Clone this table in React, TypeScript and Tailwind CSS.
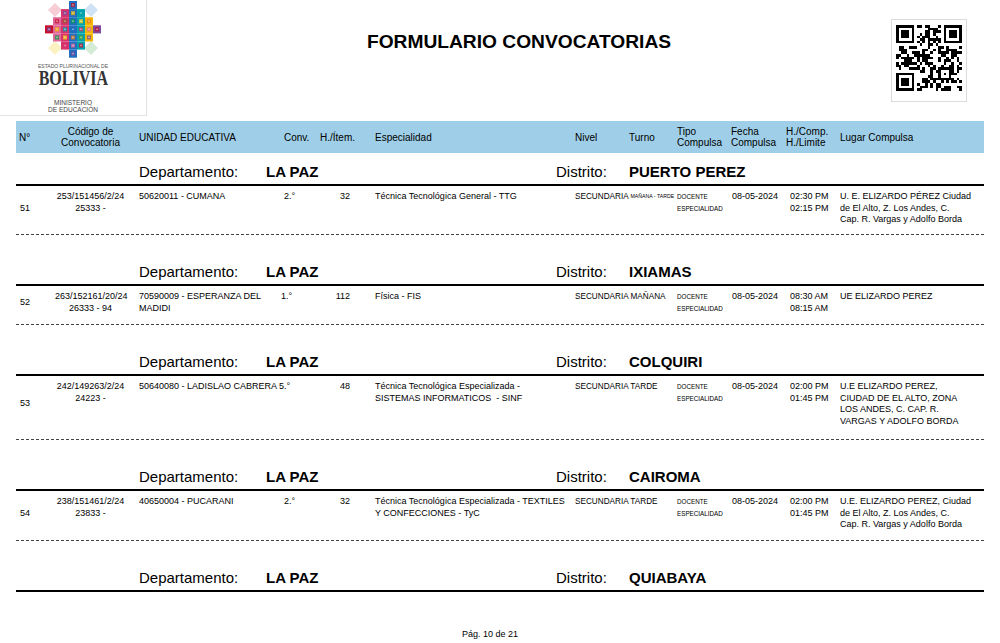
import React from "react";

const TILE_COLORS = [
  "#c8102e", "#f2b705", "#0a9a48", "#1f6fc0", "#e87722", "#e0679a",
  "#7a4b9c", "#8b5a2b", "#00a3ad", "#f5d31a", "#d6336c", "#5aa02c",
];

function Chakana() {
  const tiles: React.ReactNode[] = [];
  const tw = 8;
  const th = 8.1;
  for (let r = 0; r < 7; r++) {
    for (let c = 0; c < 7; c++) {
      if (Math.abs(r - 3) + Math.abs(c - 3) <= 3) {
        const i = r * 7 + c;
        const a = TILE_COLORS[(i * 5 + r) % TILE_COLORS.length];
        const b = TILE_COLORS[(i * 7 + 3) % TILE_COLORS.length];
        tiles.push(
          <g key={i}>
            <rect x={c * tw} y={r * th} width={tw} height={th} fill={a} />
            <rect x={c * tw + 2} y={r * th + 2} width={tw - 4} height={th - 4} fill={b} opacity={0.75} />
            <rect x={c * tw + 3.3} y={r * th + 3.3} width={1.4} height={1.4} fill="#fff" opacity={0.6} />
          </g>
        );
      }
    }
  }
  return (
    <svg width={56} height={57} viewBox="0 0 56 57">
      <polygon points="10,2 17,9 10,16 3,9" fill="#f7cdd6" />
      <polygon points="46,2 53,9 46,16 39,9" fill="#cfe3f4" />
      <polygon points="10,40 17,47 10,54 3,47" fill="#fbf1c2" />
      <polygon points="46,40 53,47 46,54 39,47" fill="#d4ecd6" />
      {tiles}
    </svg>
  );
}

function QR() {
  const N = 25;
  let s = 987654321;
  const rnd = () => {
    s = (Math.imul(s, 1664525) + 1013904223) >>> 0;
    return s / 4294967296;
  };
  const m: boolean[][] = [];
  for (let r = 0; r < N; r++) {
    const row: boolean[] = [];
    for (let c = 0; c < N; c++) row.push(rnd() < 0.5);
    m.push(row);
  }
  const finder = (r0: number, c0: number) => {
    for (let i = -1; i <= 7; i++) {
      for (let j = -1; j <= 7; j++) {
        const r = r0 + i;
        const c = c0 + j;
        if (r < 0 || c < 0 || r >= N || c >= N) continue;
        const inside = i >= 0 && i <= 6 && j >= 0 && j <= 6;
        m[r][c] =
          inside &&
          (i === 0 || i === 6 || j === 0 || j === 6 || (i >= 2 && i <= 4 && j >= 2 && j <= 4));
      }
    }
  };
  finder(0, 0);
  finder(0, N - 7);
  finder(N - 7, 0);
  for (let k = 8; k < N - 8; k++) {
    m[6][k] = k % 2 === 0;
    m[k][6] = k % 2 === 0;
  }
  for (let i = -2; i <= 2; i++) {
    for (let j = -2; j <= 2; j++) {
      m[18 + i][18 + j] = Math.max(Math.abs(i), Math.abs(j)) !== 1;
    }
  }
  const rects: React.ReactNode[] = [];
  for (let r = 0; r < N; r++) {
    for (let c = 0; c < N; c++) {
      if (m[r][c]) rects.push(<rect key={r * N + c} x={c} y={r} width={1} height={1} fill="#000" />);
    }
  }
  return (
    <svg width={66} height={66} viewBox="0 0 25 25" shapeRendering="crispEdges">
      {rects}
    </svg>
  );
}

type Row = {
  n: string;
  code: string[];
  unidad: string[];
  conv: string;
  convCls: string;
  item: string;
  esp: string[];
  turno: React.ReactNode;
  fecha: string;
  horas: string[];
  lugar: string[];
  h: string;
};

type Group = { dep: string; dist: string; row?: Row };

const groups: Group[] = [
  {
    dep: "LA PAZ",
    dist: "PUERTO PEREZ",
    row: {
      n: "51",
      code: ["253/151456/2/24", "25333 -"],
      unidad: ["50620011 - CUMANA"],
      conv: "2.°",
      convCls: "w-[51px] shrink-0 pl-[5px]",
      item: "32",
      esp: ["Técnica Tecnológica General - TTG"],
      turno: <span className="text-[5.2px] align-middle">MAÑANA - TARDE</span>,
      fecha: "08-05-2024",
      horas: ["02:30 PM", "02:15 PM"],
      lugar: ["U. E. ELIZARDO PÉREZ Ciudad", "de El Alto, Z. Los Andes, C.", "Cap. R. Vargas y Adolfo Borda"],
      h: "h-[49px]",
    },
  },
  {
    dep: "LA PAZ",
    dist: "IXIAMAS",
    row: {
      n: "52",
      code: ["263/152161/20/24", "26333 - 94"],
      unidad: ["70590009 - ESPERANZA DEL", "MADIDI"],
      conv: "1.°",
      convCls: "w-[51px] shrink-0 pl-[2px]",
      item: "112",
      esp: ["Física - FIS"],
      turno: "MAÑANA",
      fecha: "08-05-2024",
      horas: ["08:30 AM", "08:15 AM"],
      lugar: ["UE ELIZARDO PEREZ"],
      h: "h-[39px]",
    },
  },
  {
    dep: "LA PAZ",
    dist: "COLQUIRI",
    row: {
      n: "53",
      code: ["242/149263/2/24", "24223 -"],
      unidad: ["50640080 - LADISLAO CABRERA"],
      conv: "5.°",
      convCls: "w-[51px] shrink-0 pl-0",
      item: "48",
      esp: ["Técnica Tecnológica Especializada -", "SISTEMAS INFORMATICOS\u00a0 - SINF"],
      turno: "TARDE",
      fecha: "08-05-2024",
      horas: ["02:00 PM", "01:45 PM"],
      lugar: ["U.E ELIZARDO PEREZ,", "CIUDAD DE EL ALTO, ZONA", "LOS ANDES, C. CAP. R.", "VARGAS Y ADOLFO BORDA"],
      h: "h-[64px]",
    },
  },
  {
    dep: "LA PAZ",
    dist: "CAIROMA",
    row: {
      n: "54",
      code: ["238/151461/2/24", "23833 -"],
      unidad: ["40650004 - PUCARANI"],
      conv: "2.°",
      convCls: "w-[51px] shrink-0 pl-[5px]",
      item: "32",
      esp: ["Técnica Tecnológica Especializada - TEXTILES", "Y CONFECCIONES - TyC"],
      turno: "TARDE",
      fecha: "08-05-2024",
      horas: ["02:00 PM", "01:45 PM"],
      lugar: ["U.E. ELIZARDO PEREZ, Ciudad", "de El Alto, Z. Los Andes, C.", "Cap. R. Vargas y Adolfo Borda"],
      h: "h-[50px]",
    },
  },
  { dep: "LA PAZ", dist: "QUIABAYA" },
];

function Lines({ lines }: { lines: string[] }) {
  return (
    <>
      {lines.map((l, i) => (
        <div key={i} className="whitespace-nowrap">
          {l}
        </div>
      ))}
    </>
  );
}

function DataRow({ row }: { row: Row }) {
  return (
    <div className={`${row.h} border-b border-dashed border-[#444] pt-[5px]`}>
      <div className="flex items-start text-[9px] leading-[11.5px]">
        <div className="w-[39px] shrink-0 pl-[4px] self-center">{row.n}</div>
        <div className="w-[71px] shrink-0 text-center">
          <Lines lines={row.code} />
        </div>
        <div className="w-[153px] shrink-0 pl-[13px]">
          <Lines lines={row.unidad} />
        </div>
        <div className={row.convCls}>{row.conv}</div>
        <div className="w-[45px] shrink-0 text-right pr-[25px]">{row.item}</div>
        <div className="w-[200px] shrink-0">
          <Lines lines={row.esp} />
        </div>
        <div className="w-[102px] shrink-0 text-[8.2px] whitespace-nowrap">
          SECUNDARIA {row.turno}
        </div>
        <div className="w-[55px] shrink-0 text-[6.3px] leading-[12px]">
          <div>DOCENTE</div>
          <div>ESPECIALIDAD</div>
        </div>
        <div className="w-[58px] shrink-0 whitespace-nowrap">{row.fecha}</div>
        <div className="w-[50px] shrink-0">
          <Lines lines={row.horas} />
        </div>
        <div className="flex-1">
          <Lines lines={row.lugar} />
        </div>
      </div>
    </div>
  );
}

export default function App() {
  return (
    <div className="w-[1000px] h-[643px] overflow-hidden bg-white text-black font-['Liberation_Sans',Arial,sans-serif]">
      <div className="flex h-[116px]">
        <div className="w-[147px] h-[116px] shrink-0 border-r border-b border-[#e2e2e2] flex flex-col items-center">
          <div className="mt-[1px]">
            <Chakana />
          </div>
          <div className="mt-[5px] text-[5px] leading-[6px] text-[#555] whitespace-nowrap">ESTADO PLURINACIONAL DE</div>
          <div className="text-[20px] leading-[18px] font-bold font-['Liberation_Serif',serif] text-[#333] scale-x-[0.8]">
            BOLIVIA
          </div>
          <div className="mt-[12px] text-[6.5px] leading-[7px] text-[#444] text-center">
            MINISTERIO
            <br />
            DE EDUCACIÓN
          </div>
        </div>
        <div className="flex-1 flex justify-center pt-[31px]">
          <div className="text-[19.2px] leading-[22px] font-bold">FORMULARIO CONVOCATORIAS</div>
        </div>
        <div className="w-[76px] h-[83px] shrink-0 mt-[19px] mr-[33px] border border-[#dcdcdc] flex justify-center pt-[5px]">
          <QR />
        </div>
      </div>

      <div className="mt-[5px] mx-[16px] h-[32px] bg-[#9fcfe8] flex items-center text-[10px] leading-[11px]">
        <div className="w-[39px] shrink-0 pl-[3px]">N°</div>
        <div className="w-[71px] shrink-0 text-center">
          Código de
          <br />
          Convocatoria
        </div>
        <div className="w-[158px] shrink-0 pl-[13px]">UNIDAD EDUCATIVA</div>
        <div className="w-[36px] shrink-0">Conv.</div>
        <div className="w-[55px] shrink-0">H./Ítem.</div>
        <div className="w-[200px] shrink-0">Especialidad</div>
        <div className="w-[54px] shrink-0">Nivel</div>
        <div className="w-[48px] shrink-0">Turno</div>
        <div className="w-[54px] shrink-0">
          Tipo
          <br />
          Compulsa
        </div>
        <div className="w-[55px] shrink-0">
          Fecha
          <br />
          Compulsa
        </div>
        <div className="w-[54px] shrink-0">
          H./Comp.
          <br />
          H./Limite
        </div>
        <div className="flex-1">Lugar Compulsa</div>
      </div>

      <div className="mx-[16px]">
        {groups.map((g, i) => (
          <div key={i} className={i === 0 ? "mt-[9px]" : "mt-[27px]"}>
            <div className="h-[24px] border-b-2 border-black flex text-[15px] leading-[20px]">
              <div className="w-[123px] shrink-0" />
              <div className="w-[127px] shrink-0">Departamento:</div>
              <div className="w-[290px] shrink-0 font-bold">{g.dep}</div>
              <div className="w-[73px] shrink-0">Distrito:</div>
              <div className="font-bold">{g.dist}</div>
            </div>
            {g.row && <DataRow row={g.row} />}
          </div>
        ))}
      </div>

      <div className="mt-[36px] text-center text-[9px] leading-[12px] pr-[20px]">Pág. 10 de 21</div>
    </div>
  );
}
